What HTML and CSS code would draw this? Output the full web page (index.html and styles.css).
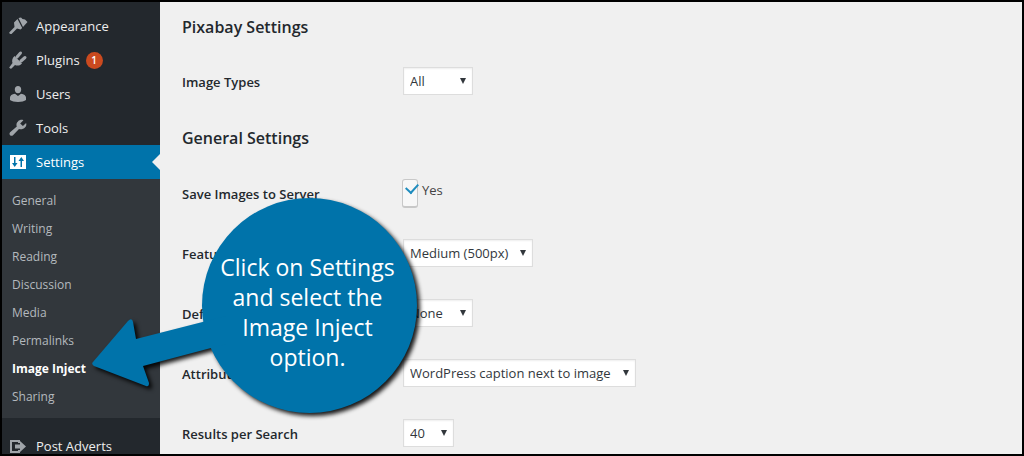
FILE: index.html
```html
<!DOCTYPE html>
<html lang="en">
<head>
    <meta charset="UTF-8">
    <meta name="viewport" content="width=device-width, initial-scale=1.0">
    <title>Image Inject Settings</title>
    <link rel="stylesheet" href="styles.css">
</head>
<body>
    <div class="admin">
        <nav class="sidebar">
            <ul class="menu">
                <li><a class="menu-link" href="#">
                    <svg class="icon" viewBox="0 0 20 20"><path d="M10.500 2 13 1.500 14.500 3 17 3.500 19.500 6 15 11zM9.500 3 14.200 12 12.500 13.500 9 12.500 3.500 18Q1.500 18.500 1.200 16.500L6.500 11 6 6.500z"/></svg>
                    <span>Appearance</span></a></li>
                <li><a class="menu-link" href="#">
                    <svg class="icon" viewBox="0 0 20 20"><path d="M6.500 6 14 13.500C11.500 16 9 16 7 15L3.500 18.500Q2 19 1.200 17.500L4.500 13C3.500 10.500 4.500 8 6.500 6z"/><path class="prong" d="m9 7 3.500-4M13 11l4-3.500"/></svg>
                    <span>Plugins</span><span class="count">1</span></a></li>
                <li><a class="menu-link" href="#">
                    <svg class="icon" viewBox="0 0 20 20"><path d="M10 9.300c-2 0-3.200-1.900-3.200-3.900C6.800 3.300 8 2 10 2s3.200 1.300 3.200 3.400c0 2-1.200 3.900-3.200 3.900zM2 16v-2.500c0-2 1.900-3.500 5-3.800l3 2.300 3-2.300c3.100.3 5 1.800 5 3.800V16c-1.500 1.300-4.500 1.900-8 1.900S3.500 17.300 2 16z"/></svg>
                    <span>Users</span></a></li>
                <li><a class="menu-link" href="#">
                    <svg class="icon" viewBox="0 0 20 20"><path d="M16.700 9.800c-1.600 1.500-3.800 1.900-5.700 1.100l-6 6.300c-.8.800-2.100.8-2.900 0s-.8-2.100 0-2.900l6.700-5.900c-.8-1.800-.3-3.600 1.200-5 1.500-1.500 3.600-1.900 5.400-1.200l-3.200 3.200 2.700 2.700 3.200-3.200c.6 1.600.2 3.500-1.400 4.900z"/></svg>
                    <span>Tools</span></a></li>
                <li><a class="menu-link current" href="#">
                    <svg class="icon" viewBox="0 0 20 20"><path fill-rule="evenodd" d="M2 3h16v14H2zM6 5v6H4l2.700 4L9.500 11H7.500V5zm6.500 10H14V9h2l-2.700-4-2.800 4h2z"/></svg>
                    <span>Settings</span></a>
                    <ul class="submenu">
                        <li><a href="#">General</a></li>
                        <li><a href="#">Writing</a></li>
                        <li><a href="#">Reading</a></li>
                        <li><a href="#">Discussion</a></li>
                        <li><a href="#">Media</a></li>
                        <li><a href="#">Permalinks</a></li>
                        <li><a class="active" href="#">Image Inject</a></li>
                        <li><a href="#">Sharing</a></li>
                    </ul>
                </li>
                <li class="separated"><a class="menu-link" href="#">
                    <svg class="icon" viewBox="0 0 20 20"><path d="M2 4h10v3h-2V6H4v9h6v-1h2v3H2zM12 5l6 5.500-6 5.500v-3.500H7v-4h5z"/></svg>
                    <span>Post Adverts</span></a></li>
            </ul>
        </nav>

        <main class="content">
            <form>
                <h2>Pixabay Settings</h2>
                <div class="row">
                    <label for="types">Image Types</label>
                    <div class="select"><select id="types" class="w-short"><option>All</option></select></div>
                </div>

                <h2>General Settings</h2>
                <div class="row">
                    <label for="save">Save Images to Server</label>
                    <div class="check"><input type="checkbox" id="save" checked><label for="save">Yes</label></div>
                </div>
                <div class="row">
                    <label for="size">Featured</label>
                    <div class="select"><select id="size" class="w-medium"><option>Medium (500px)</option></select></div>
                </div>
                <div class="row">
                    <label for="align">Default</label>
                    <div class="select"><select id="align" class="w-short"><option>None</option></select></div>
                </div>
                <div class="row">
                    <label for="attribution">Attribution</label>
                    <div class="select"><select id="attribution" class="w-long"><option>WordPress caption next to image</option></select></div>
                </div>
                <div class="row">
                    <label for="results">Results per Search</label>
                    <div class="select"><select id="results" class="w-number"><option>40</option></select></div>
                </div>
            </form>
        </main>

        <div class="callout">
            <svg class="callout-shape" viewBox="0 0 340 230">
                <circle cx="223.500" cy="115.500" r="107.500"/>
                <path d="M7 172 42 131q4-4 5 1l3 17 90-23v28L57 176l6 17q0 4-3 3L8 176q-3-2-1-4z"/>
            </svg>
            <p>Click on Settings<br>and select the<br>Image Inject<br>option.</p>
        </div>
    </div>
</body>
</html>
```
FILE: styles.css
```css
* {
    box-sizing: border-box;
}
body {
    margin: 0;
    font-family: "Segoe UI", "Open Sans", "Noto Sans", sans-serif;
    font-size: 13px;
    color: #444;
}
a {
    text-decoration: none;
}
ul {
    list-style: none;
    margin: 0;
    padding: 0;
}
.admin {
    position: relative;
    display: flex;
    height: 100vh;
    border: 2px solid #000;
    background: #f0f0f0;
    overflow: hidden;
}

/* sidebar */
.sidebar {
    flex: 0 0 158px;
    padding-top: 7px;
    background: #23282d;
}
.menu-link {
    position: relative;
    display: flex;
    align-items: center;
    height: 34px;
    padding-left: 6px;
    font-size: 13px;
    color: #eee;
}
.icon {
    width: 20px;
    height: 20px;
    margin-right: 8px;
    fill: #a0a5aa;
}
.prong {
    stroke: #a0a5aa;
    stroke-width: 3;
    stroke-linecap: round;
}
.count {
    width: 17px;
    height: 17px;
    margin-left: 6px;
    border-radius: 50%;
    background: #ca4a1f;
    color: #fff;
    font-size: 10px;
    font-weight: 600;
    line-height: 17px;
    text-align: center;
}
.current {
    background: #0073aa;
    color: #fff;
}
.current .icon {
    fill: #fff;
}
.current::after {
    content: "";
    position: absolute;
    right: 0;
    top: 9px;
    border: 8px solid transparent;
    border-left: 0;
    border-right-color: #f0f0f0;
}
.submenu {
    padding: 8px 0 7px;
    background: #32373c;
}
.submenu a {
    display: block;
    padding-left: 10px;
    font-size: 12px;
    line-height: 28px;
    color: #b4b9be;
}
.submenu .active {
    color: #fff;
    font-weight: 700;
}
.separated {
    margin-top: 11px;
}

/* settings form */
.content {
    flex: 1;
    padding-left: 22px;
}
h2 {
    margin: 0;
    font-size: 16px;
    font-weight: 600;
    line-height: 52px;
    color: #23282d;
}
form h2:first-child {
    line-height: 50px;
}
.row {
    display: grid;
    grid-template-columns: 221px 1fr;
    align-items: center;
    height: 60px;
}
.row > label {
    font-weight: 600;
    color: #23282d;
}
.select {
    position: relative;
    justify-self: start;
    margin-bottom: 2px;
}
.select::after {
    content: "";
    position: absolute;
    right: 7px;
    top: 11px;
    border: 3px solid transparent;
    border-top: 6px solid #32373c;
    border-bottom: 0;
    pointer-events: none;
}
select {
    display: block;
    appearance: none;
    height: 28px;
    padding: 0 6px;
    border: 1px solid #ddd;
    border-radius: 0;
    background: #fff;
    box-shadow: inset 0 1px 2px rgba(0, 0, 0, 0.07);
    color: #32373c;
    font-family: inherit;
    font-size: 13px;
}
.w-short {
    width: 70px;
}
.w-medium {
    width: 130px;
}
.w-long {
    width: 233px;
}
.w-number {
    width: 51px;
}
.check {
    display: flex;
    gap: 4px;
    margin-bottom: 2px;
}
.check input {
    appearance: none;
    width: 16px;
    height: 29px;
    margin: 0 0 0 -1px;
    border: 1px solid #c8c8c8;
    border-bottom-width: 2px;
    border-radius: 3px;
    background: #f7f7f7;
}
.check input:checked::before {
    content: "";
    display: block;
    width: 6px;
    height: 10px;
    margin: 1px 0 0 5px;
    border: solid #1e8cbe;
    border-width: 0 2px 2px 0;
    transform: rotate(42deg);
}
.check label {
    line-height: 22px;
}

/* tooltip bubble with the arrow */
.callout {
    position: absolute;
    left: 84px;
    top: 188px;
    width: 340px;
    height: 230px;
}
.callout-shape {
    display: block;
    width: 340px;
    height: 230px;
    overflow: visible;
    fill: #0073aa;
    filter: drop-shadow(3px 3px 2px rgba(0, 0, 0, 0.9));
}
.callout p {
    position: absolute;
    left: 114px;
    top: 62px;
    width: 215px;
    margin: 0;
    color: #fff;
    font-size: 23px;
    line-height: 30px;
    text-align: center;
}
```
